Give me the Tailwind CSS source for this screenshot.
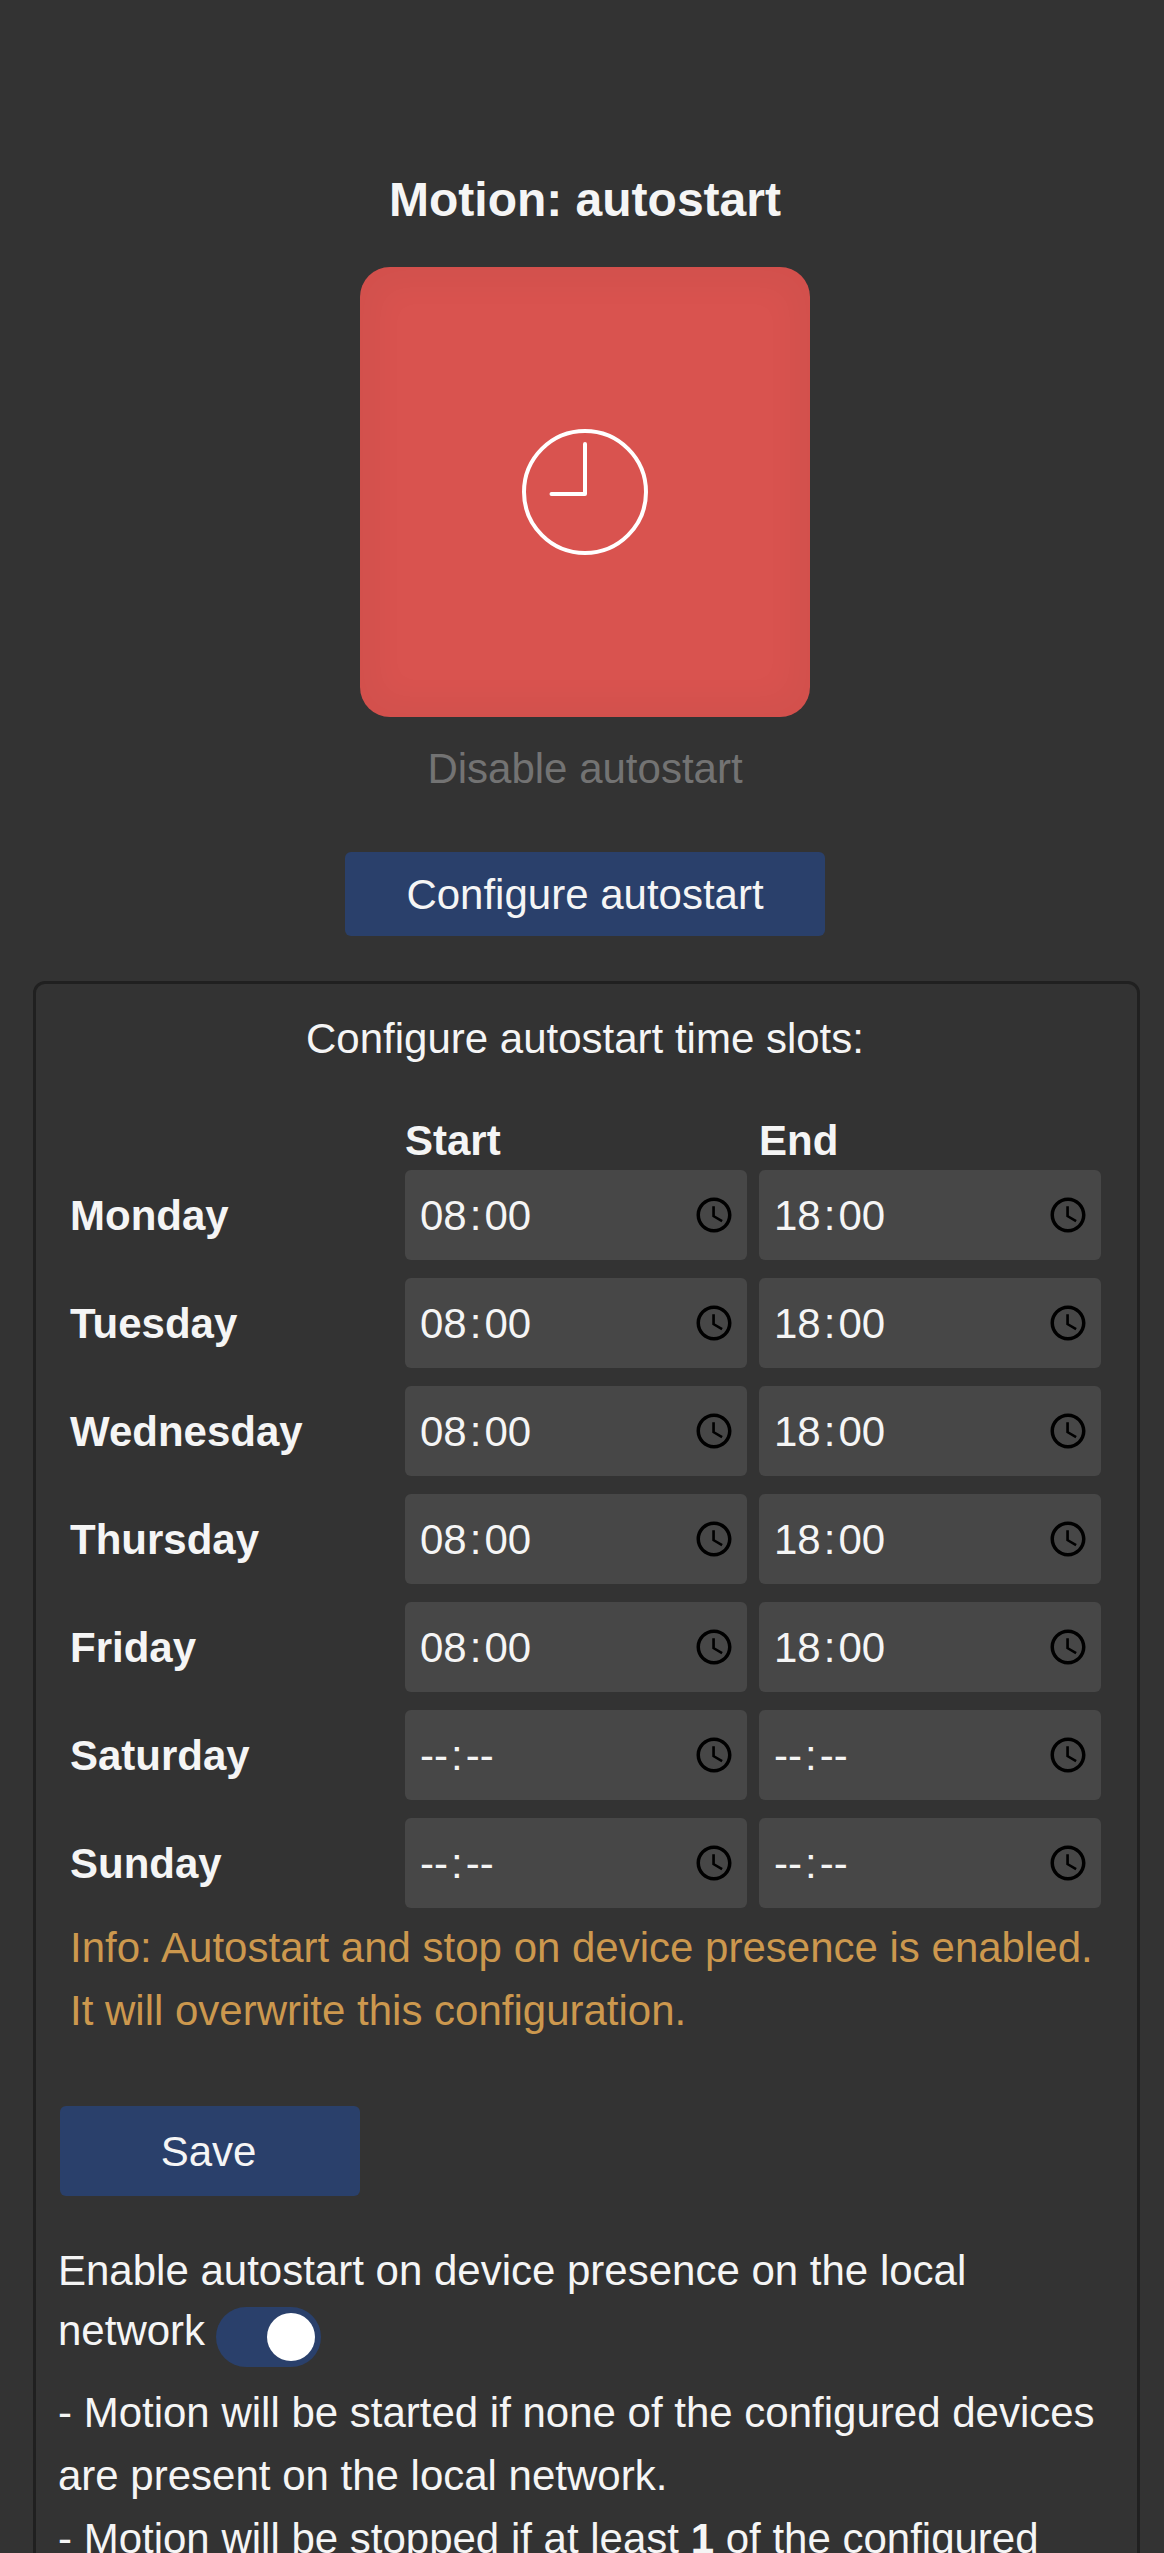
<!DOCTYPE html>
<html lang="en">
<head>
<meta charset="utf-8">
<title>Motion: autostart</title>
<script src="https://cdn.jsdelivr.net/npm/@tailwindcss/browser@4"></script>
</head>
<body class="h-[2553px] overflow-hidden bg-[#333333] text-[#f5f5f5] text-[42px] leading-[63px] font-['Liberation_Sans',Arial,sans-serif]">
<svg class="hidden">
  <symbol id="time" viewBox="0 0 24 24">
    <path d="M11.99 2C6.47 2 2 6.48 2 12s4.47 10 9.99 10C17.52 22 22 17.52 22 12S17.52 2 11.99 2zM12 20c-4.42 0-8-3.58-8-8s3.58-8 8-8 8 3.58 8 8-3.58 8-8 8z"/>
    <path d="M12.5 7H11v6l5.25 3.15.75-1.23-4.5-2.67z"/>
  </symbol>
</svg>
<main class="w-[1170px] pt-[164px]">
  <section class="flex flex-col items-center">
    <h1 class="text-[48px] leading-[72px] font-bold">Motion: autostart</h1>
    <button class="mt-[31px] flex size-[450px] items-center justify-center rounded-[30px] bg-[#d9534f] shadow-[inset_0_0_30px_20px_rgba(0,0,0,0.03)]" aria-label="Disable autostart">
      <svg class="size-[126px]" viewBox="0 0 126 126" fill="none" stroke="#fff" stroke-width="4" stroke-linecap="round" stroke-linejoin="round">
        <circle cx="63" cy="63" r="61"/>
        <path d="M63 15v50H29.500"/>
      </svg>
    </button>
    <p class="mt-5 text-[#737373]">Disable autostart</p>
    <button class="mt-[52px] h-[84px] w-[480px] rounded-md bg-[#2a406b]">Configure autostart</button>
  </section>

  <section class="mt-[45px] ml-[33px] h-[1700px] w-[1107px] rounded-xl border-3 border-[#202020] pt-[23px]">
    <h2 class="pr-[3px] text-center">Configure autostart time slots:</h2>
    <div class="mt-[39px] ml-[34px] grid grid-cols-[335px_342px_342px] font-bold">
      <span></span><span class="h-[61px]">Start</span><span class="ml-3 h-[61px]">End</span>
    </div>
    <div id="slots" class="ml-[34px] flex flex-col gap-[18px]"></div>
    <p class="mt-2 ml-[34px] w-[1040px] text-[#cc984e]">Info: Autostart and stop on device presence is enabled.<br>It will overwrite this configuration.</p>
    <button class="mt-16 ml-6 block h-[90px] w-[300px] rounded-md bg-[#2a406b] pr-[3px]">Save</button>
    <p class="mt-[45px] ml-[22px] w-[1040px] leading-[60px]">Enable autostart on device presence on the local<br>network <span class="mt-[6px] -mb-[6px] -ml-px inline-flex h-[60px] w-[105px] items-center justify-end rounded-full bg-[#2a406b] pr-1.5 align-top"><span class="size-12 rounded-full bg-white"></span></span></p>
    <p class="mt-5 ml-[22px] w-[1060px]">- Motion will be started if none of the configured devices<br>are present on the local network.<br>- Motion will be stopped if at least <b>1</b> of the configured</p>
  </section>
</main>
<script>
  const slots = [
    ['Monday', '08:00', '18:00'],
    ['Tuesday', '08:00', '18:00'],
    ['Wednesday', '08:00', '18:00'],
    ['Thursday', '08:00', '18:00'],
    ['Friday', '08:00', '18:00'],
    ['Saturday', '--:--', '--:--'],
    ['Sunday', '--:--', '--:--'],
  ];
  const field = (time) => {
    const [h, m] = time.split(':');
    return `<div class="flex h-[90px] items-center rounded-md bg-[#474747] pr-3 pl-[15px]"><span>${h}</span><span class="mx-[3px]">:</span><span>${m}</span><svg class="ml-auto size-[42px] fill-black"><use href="#time"/></svg></div>`;
  };
  document.getElementById('slots').innerHTML = slots.map(([day, start, end]) =>
    `<div class="grid grid-cols-[335px_342px_12px_342px] items-center"><span class="font-bold">${day}</span>${field(start)}<span></span>${field(end)}</div>`).join('');
</script>
</body>
</html>
